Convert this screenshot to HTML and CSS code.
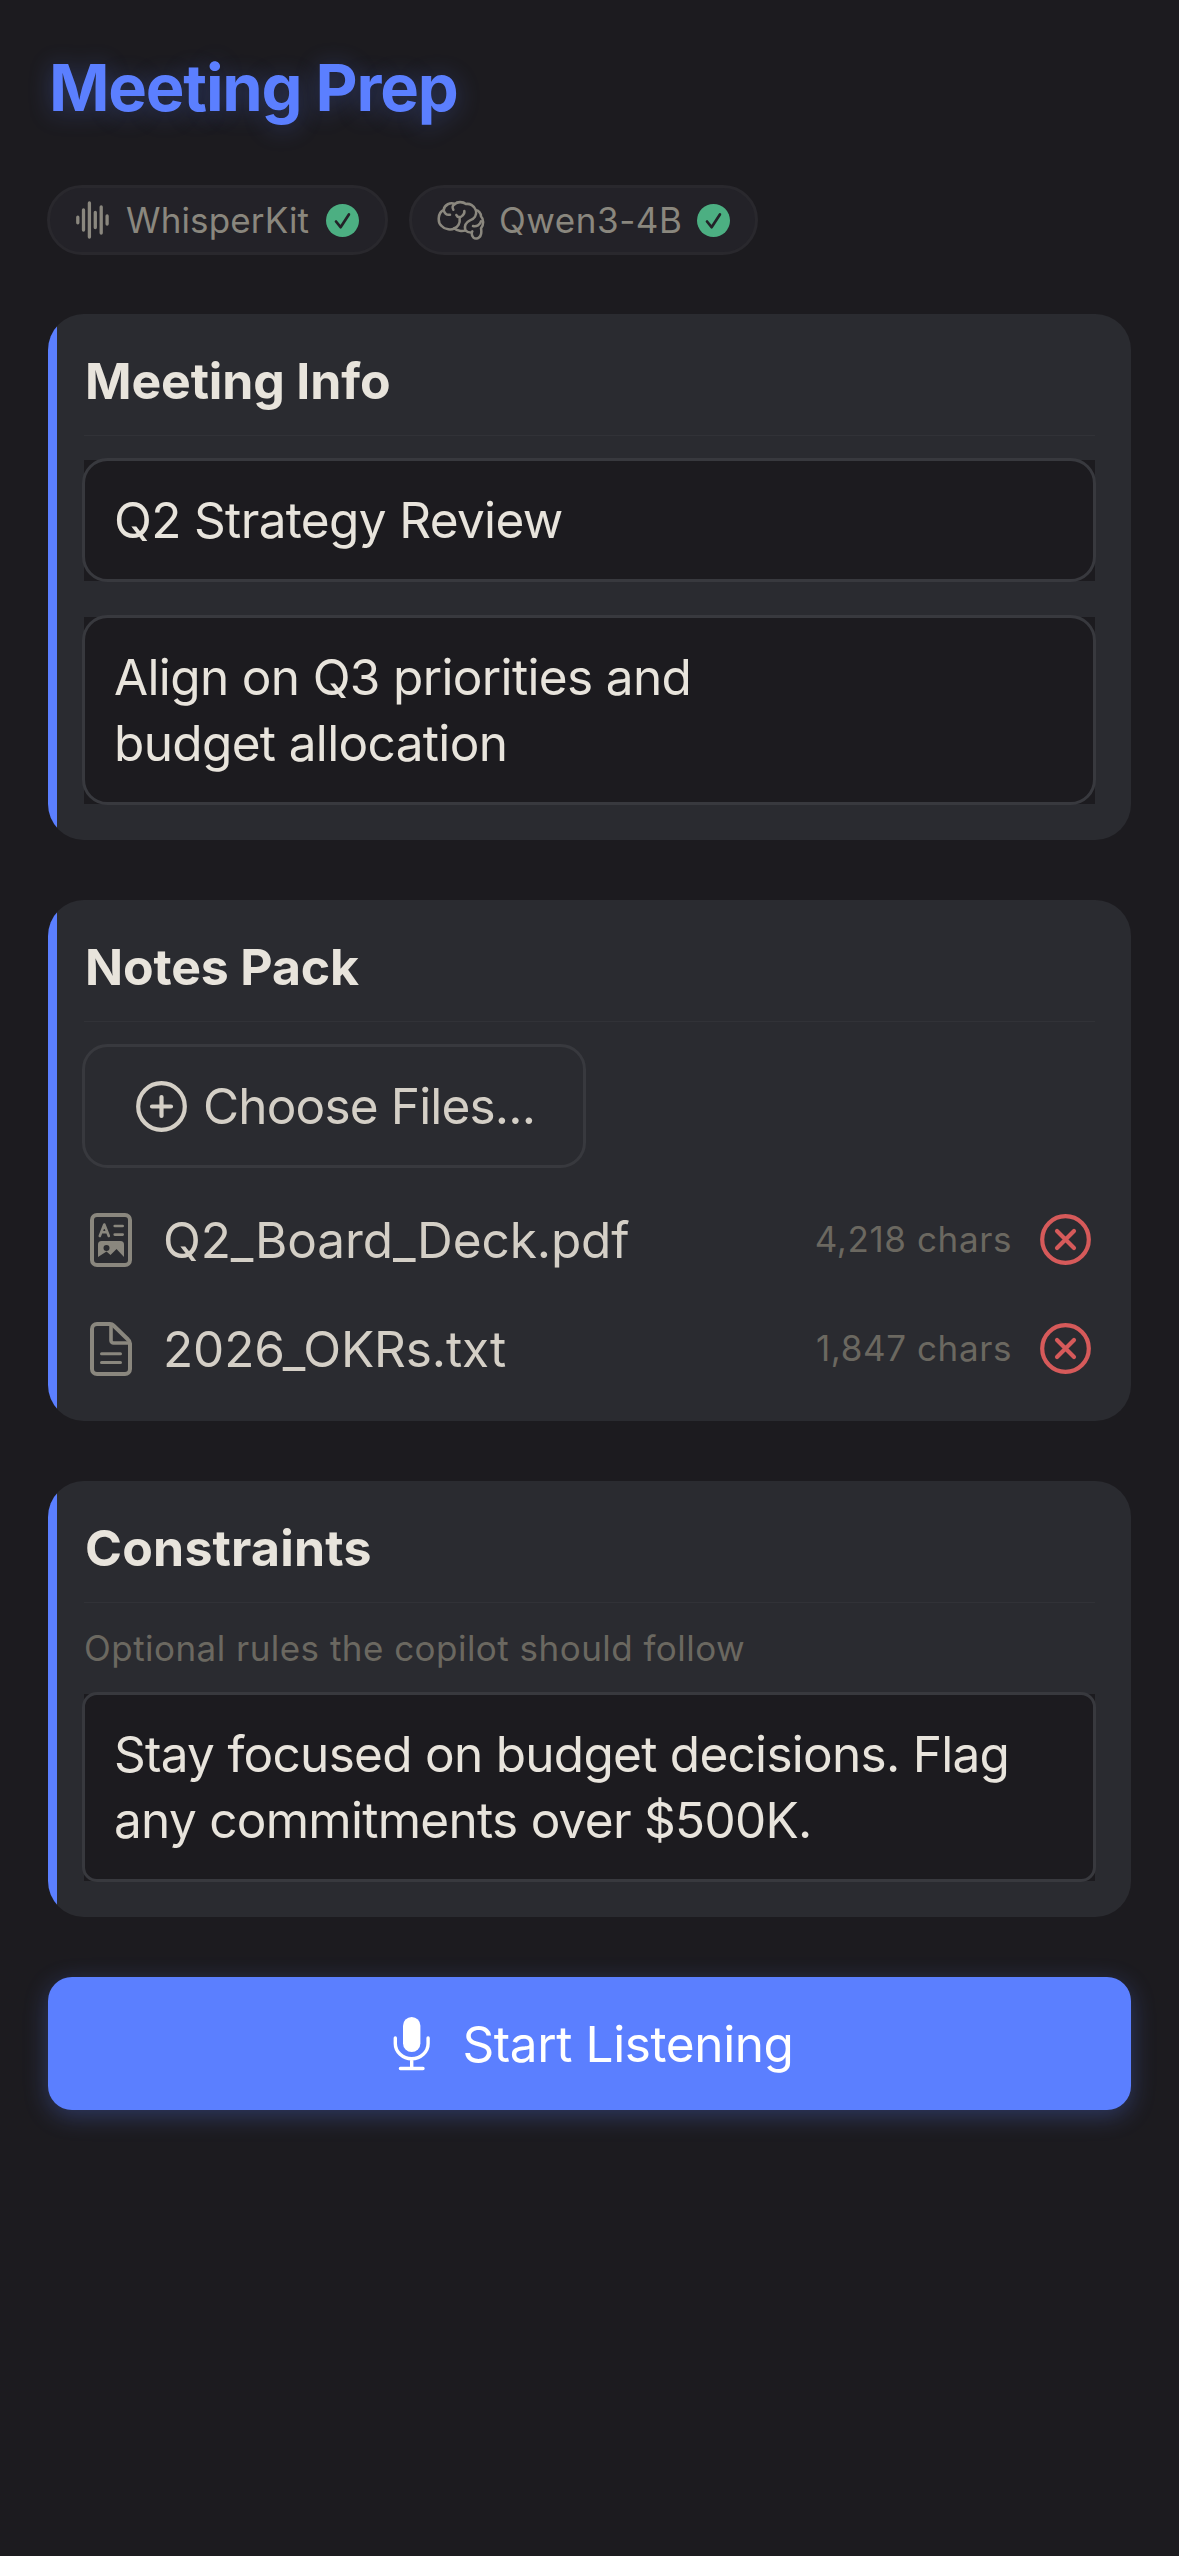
FILE: index.html
```html
<!DOCTYPE html>
<html lang="en">
<head>
<meta charset="utf-8">
<title>Meeting Prep</title>
<link rel="stylesheet" href="styles.css">
</head>
<body>
<main class="screen">
  <h1 class="title">Meeting Prep</h1>

  <div class="chips">
    <div class="chip">
      <svg class="wave" width="34" height="40" viewBox="0 0 34 40" fill="none" stroke="currentColor" stroke-width="3.3" stroke-linecap="round"><path d="M1.8 17.200v5.600M7.500 10v20M13.400 3v34M19.300 12.500v15M25.200 7v26M31.100 16v8"/></svg>
      <span class="chip-label whisper">WhisperKit</span>
      <svg class="check" width="33" height="33" viewBox="0 0 33 33"><circle cx="16.5" cy="16.5" r="16.5" fill="#4caf82"/><path d="M10 17.5l4.6 5.7 8.3-12.8" fill="none" stroke="#232228" stroke-width="2.7" stroke-linecap="round" stroke-linejoin="round"/></svg>
    </div>
    <div class="chip">
      <svg class="brain" width="48" height="41" viewBox="108 90 144 123" fill="none" stroke="currentColor" stroke-width="7.6" stroke-linecap="round" stroke-linejoin="round">
        <path d="M128 120C110 128 109 158 122 168C132 180 152 180 160 175C168 183 184 185 193 181C200 188 207 188 212 188C212 202 220 208 230 205C241 200 242 186 240 175C249 165 248 146 240 139C240 129 232 121 225 121C220 107 206 100 195 102C185 94 168 95 162 102C148 96 130 104 128 120Z"/>
        <path d="M128 121C131 130 138 136 147 134M162 102C154 105 153 114 157 119M166 135C169 143 180 143 184 137C190 132 191 128 190 123M176 145C178 160 170 172 160 175M225 121C228 136 219 147 207 151C195 157 189 168 193 181M216 168C226 171 238 164 240 154M212 188L214 184"/>
      </svg>
      <span class="chip-label qwen">Qwen3-4B</span>
      <svg class="check" width="33" height="33" viewBox="0 0 33 33"><circle cx="16.5" cy="16.5" r="16.5" fill="#4caf82"/><path d="M10 17.5l4.6 5.7 8.3-12.8" fill="none" stroke="#232228" stroke-width="2.7" stroke-linecap="round" stroke-linejoin="round"/></svg>
    </div>
  </div>

  <section class="card">
    <h2 class="card-title">Meeting Info</h2>
    <div class="card-body">
      <div class="field">Q2 Strategy Review</div>
      <div class="field">Align on Q3 priorities and<br>budget allocation</div>
    </div>
  </section>

  <section class="card">
    <h2 class="card-title">Notes Pack</h2>
    <div class="card-body">
      <div class="choose">
        <svg width="51" height="51" viewBox="0 0 51 51" fill="none" stroke="currentColor" stroke-width="4.2" stroke-linecap="round"><circle cx="25.5" cy="25.5" r="23.3"/><path d="M25.5 16v19M16 25.5h19"/></svg>
        <span>Choose Files...</span>
      </div>
      <div class="file">
        <svg class="file-icon" width="42" height="54" viewBox="0 0 42 54" fill="none" stroke="currentColor" stroke-width="4" stroke-linecap="round" stroke-linejoin="round">
          <rect x="2" y="2" width="38" height="50" rx="5"/>
          <path stroke-width="2.6" d="M9.8 23L14.3 11.5L18.8 23M11.3 19.3h6M24.7 13h8M24.7 21.6h8"/>
          <path fill="currentColor" fill-rule="evenodd" stroke="none" d="M11.5 28h19a3.5 3.5 0 0 1 3.5 3.5V44l-7.5-8-6 6-4-3.500L8 44V31.500a3.500 3.500 0 0 1 3.500-3.500zM16.500 32a3 3 0 1 0 0 6a3 3 0 0 0 0-6z"/>
        </svg>
        <span class="file-name">Q2_Board_Deck.pdf</span>
        <span class="count">4,218 chars</span>
        <svg class="remove" width="51" height="51" viewBox="0 0 51 51" fill="none" stroke="currentColor" stroke-width="4.2" stroke-linecap="round"><circle cx="25.500" cy="25.500" r="23.300"/><path d="M17 17l17 17M34 17L17 34"/></svg>
      </div>
      <div class="file">
        <svg class="file-icon" width="42" height="54" viewBox="0 0 42 54" fill="none" stroke="currentColor" stroke-width="4" stroke-linejoin="round" stroke-linecap="round">
          <path d="M7 2H20a5 5 0 0 1 3.500 1.500L38 17.500a5 5 0 0 1 2 4V47a5 5 0 0 1-5 5H7a5 5 0 0 1-5-5V7a5 5 0 0 1 5-5z"/>
          <path stroke-width="3.600" d="M21 3V18.500a2.500 2.500 0 0 0 2.500 2.500H39"/>
          <path stroke-width="3" d="M11.500 31.700h19M11.500 40.400h19"/>
        </svg>
        <span class="file-name">2026_OKRs.txt</span>
        <span class="count">1,847 chars</span>
        <svg class="remove" width="51" height="51" viewBox="0 0 51 51" fill="none" stroke="currentColor" stroke-width="4.2" stroke-linecap="round"><circle cx="25.500" cy="25.500" r="23.300"/><path d="M17 17l17 17M34 17L17 34"/></svg>
      </div>
    </div>
  </section>

  <section class="card">
    <h2 class="card-title constraints">Constraints</h2>
    <div class="card-body tight">
      <p class="hint">Optional rules the copilot should follow</p>
      <div class="field small-radius">Stay focused on budget decisions. Flag<br>any commitments over $500K.</div>
    </div>
  </section>

  <div class="start">
    <svg width="45" height="54" viewBox="0 0 45 54" fill="none" stroke="currentColor" stroke-width="3.400" stroke-linecap="round"><rect x="18" y="0" width="17.400" height="35" rx="8.700" fill="currentColor" stroke="none"/><path d="M10.300 21v5.500a16.400 15.300 0 0 0 32.800 0V21M26.700 42v9M15.400 51.500h22.600"/></svg>
    <span>Start Listening</span>
  </div>
</main>
</body>
</html>
```
FILE: styles.css
```css
* {
  box-sizing: border-box;
}

body {
  margin: 0;
  background: #1c1b1f;
  color: #e8e4dc;
  font-family: Inter, "Liberation Sans", sans-serif;
  font-size: 49.5px;
  line-height: 66px;
  letter-spacing: -0.65px;
  white-space: nowrap;
}

svg {
  display: block;
  flex: none;
}

.screen {
  width: 1179px;
  min-height: 2556px;
  padding: 48px 48px 0;
}

.title {
  margin: 0;
  padding-left: 1px;
  font-size: 65px;
  font-weight: 700;
  line-height: 79px;
  letter-spacing: -1.22px;
  color: #5b7fff;
  text-shadow: 0 3px 24px rgba(91, 127, 255, 0.3);
}

.chips {
  display: flex;
  gap: 21px;
  margin: 58px 0 59px -1px;
}

.chip {
  display: flex;
  align-items: center;
  height: 70px;
  padding: 0 26px;
  border: 3px solid #29282d;
  border-radius: 35px;
  background: #232228;
  color: #8a877e;
  font-size: 35px;
}

.chip:first-child {
  width: 341px;
}

.chip:last-child {
  width: 349px;
  padding-left: 25px;
  padding-right: 25px;
}

.chip-label {
  margin-left: 16px;
}

.whisper {
  letter-spacing: 0.14px;
}

.qwen {
  margin-left: 14px;
  letter-spacing: 0.55px;
}

.check {
  margin-left: auto;
}

.card {
  margin-bottom: 60px;
  padding: 37px 36px 36px;
  border-radius: 36px;
  background: linear-gradient(90deg, #5b7fff 9px, #2a2b30 9px);
}

.card-title {
  margin: 0 0 24px;
  padding: 0 0 24px 1px;
  border-bottom: 1px solid #313237;
  font-size: 50px;
  font-weight: 700;
  line-height: 60px;
  letter-spacing: -0.15px;
}

.card-title.constraints {
  letter-spacing: 0.2px;
}

.card-body {
  display: flex;
  flex-direction: column;
  gap: 36px;
}

.card-body.tight {
  gap: 24px;
}

.field {
  position: relative;
  padding: 27px 30px 28px;
  background: #1c1b1f;
}

.field::after {
  content: "";
  position: absolute;
  inset: -2px -1px -1px -2px;
  border: 3px solid #38393e;
  border-radius: 25.5px;
}

.field.small-radius {
  letter-spacing: -0.72px;
}

.field.small-radius::after {
  border-radius: 15px;
}

.choose {
  display: flex;
  align-items: center;
  gap: 16px;
  align-self: flex-start;
  width: 504px;
  height: 124px;
  margin: -2px -1px -1px -2px;
  padding-left: 51px;
  border: 3px solid #38393e;
  border-radius: 25.5px;
  color: #d4cfc6;
  letter-spacing: -0.84px;
}

.file {
  display: flex;
  align-items: center;
  height: 73px;
  padding: 0 4px 0 6px;
  color: #d4cfc6;
  letter-spacing: -0.1px;
}

.file-icon {
  color: #8a877e;
}

.file-name {
  flex: 1;
  margin-left: 31px;
}

.count {
  margin-right: 28px;
  padding-bottom: 1px;
  color: #6b6860;
  font-size: 35px;
  letter-spacing: 0.6px;
}

.remove {
  color: #d65a5a;
}

.hint {
  margin: 0;
  color: #6b6860;
  font-size: 35px;
  line-height: 43px;
  letter-spacing: 0.47px;
}

.start {
  display: flex;
  align-items: center;
  justify-content: center;
  gap: 32px;
  height: 133px;
  border-radius: 24px;
  background: #5b7fff;
  box-shadow: 0 6px 24px rgba(91, 127, 255, 0.3);
  color: #fff;
  letter-spacing: -0.39px;
}
```
